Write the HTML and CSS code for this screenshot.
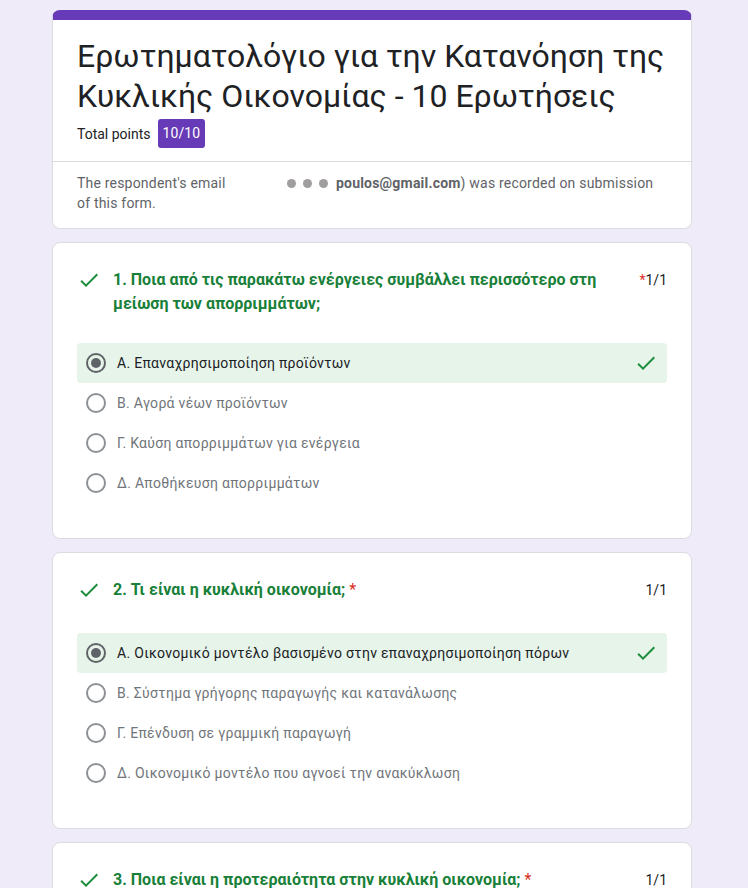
FILE: index.html
```html
<!DOCTYPE html>
<html lang="el">
<head>
<meta charset="utf-8">
<title>Ερωτηματολόγιο</title>
<link rel="stylesheet" href="styles.css">
</head>
<body>
<main class="page">
  <section class="card header-card">
    <div class="header-main">
      <h1 class="form-title">Ερωτηματολόγιο για την Κατανόηση της Κυκλικής Οικονομίας - 10 Ερωτήσεις</h1>
      <div class="total">
        <span class="total-label">Total points</span>
        <span class="badge">10/10</span>
      </div>
    </div>
    <div class="email-row">
      <div class="email-left">The respondent's email of this form.</div>
      <div class="email-right">
        <span class="dot"></span><span class="dot"></span><span class="dot"></span><b>poulos@gmail.com</b>) was recorded on submission
      </div>
    </div>
  </section>

  <section class="card q-card">
    <div class="q-head">
      <svg class="q-check" viewBox="0 0 24 24" width="24" height="24"><path d="M9 16.17L4.83 12l-1.42 1.41L9 19 21 7l-1.41-1.41z"/></svg>
      <div class="q-title">1. Ποια από τις παρακάτω ενέργειες συμβάλλει περισσότερο στη μείωση των απορριμμάτων;</div>
      <div class="q-points"><span class="req">*</span>1/1</div>
    </div>
    <ul class="options">
      <li class="option correct"><span class="radio on"></span><span class="opt-text">Α. Επαναχρησιμοποίηση προϊόντων</span><svg class="opt-check" viewBox="0 0 24 24" width="24" height="24"><path d="M9 16.17L4.83 12l-1.42 1.41L9 19 21 7l-1.41-1.41z"/></svg></li>
      <li class="option"><span class="radio"></span><span class="opt-text">Β. Αγορά νέων προϊόντων</span></li>
      <li class="option"><span class="radio"></span><span class="opt-text">Γ. Καύση απορριμμάτων για ενέργεια</span></li>
      <li class="option"><span class="radio"></span><span class="opt-text">Δ. Αποθήκευση απορριμμάτων</span></li>
    </ul>
  </section>

  <section class="card q-card">
    <div class="q-head">
      <svg class="q-check" viewBox="0 0 24 24" width="24" height="24"><path d="M9 16.17L4.83 12l-1.42 1.41L9 19 21 7l-1.41-1.41z"/></svg>
      <div class="q-title">2. Τι είναι η κυκλική οικονομία; <span class="req">*</span></div>
      <div class="q-points">1/1</div>
    </div>
    <ul class="options">
      <li class="option correct"><span class="radio on"></span><span class="opt-text">Α. Οικονομικό μοντέλο βασισμένο στην επαναχρησιμοποίηση πόρων</span><svg class="opt-check" viewBox="0 0 24 24" width="24" height="24"><path d="M9 16.17L4.83 12l-1.42 1.41L9 19 21 7l-1.41-1.41z"/></svg></li>
      <li class="option"><span class="radio"></span><span class="opt-text">Β. Σύστημα γρήγορης παραγωγής και κατανάλωσης</span></li>
      <li class="option"><span class="radio"></span><span class="opt-text">Γ. Επένδυση σε γραμμική παραγωγή</span></li>
      <li class="option"><span class="radio"></span><span class="opt-text">Δ. Οικονομικό μοντέλο που αγνοεί την ανακύκλωση</span></li>
    </ul>
  </section>

  <section class="card q-card">
    <div class="q-head">
      <svg class="q-check" viewBox="0 0 24 24" width="24" height="24"><path d="M9 16.17L4.83 12l-1.42 1.41L9 19 21 7l-1.41-1.41z"/></svg>
      <div class="q-title">3. Ποια είναι η προτεραιότητα στην κυκλική οικονομία; <span class="req">*</span></div>
      <div class="q-points">1/1</div>
    </div>
  </section>
</main>
</body>
</html>
```

FILE: styles.css
```css
html, body {
  margin: 0;
  padding: 0;
  background: #f0ebf8;
  font-family: Roboto, "Noto Sans", Arial, sans-serif;
  color: #202124;
}

.page {
  width: 640px;
  margin: 10px 0 0 52px;
  display: flex;
  flex-direction: column;
  gap: 13px;
  padding-bottom: 40px;
}

.card {
  background: #fff;
  border: 1px solid #dadce0;
  border-radius: 8px;
  box-sizing: border-box;
}

.header-card {
  border-top: 10px solid #673ab7;
}

.header-main {
  padding: 16px 24px 13px;
  border-bottom: 1px solid #dadce0;
}

.form-title {
  margin: 0;
  font-size: 32px;
  line-height: 40px;
  font-weight: 400;
  color: #202124;
}

.total {
  margin-top: 3px;
  display: flex;
  align-items: center;
  gap: 7px;
  font-size: 14px;
}

.badge {
  background: #673ab7;
  color: #fff;
  height: 29px;
  line-height: 29px;
  padding: 0 5px;
  border-radius: 3px;
  letter-spacing: 0.1px;
}

.email-row {
  display: flex;
  padding: 11px 24px 15px;
  font-size: 14px;
  line-height: 20px;
  letter-spacing: 0.2px;
  color: #5f6368;
}

.email-left {
  width: 160px;
  margin-right: 50px;
  flex: none;
}

.email-right {
  display: flex;
  align-items: center;
  height: 20px;
  white-space: nowrap;
}

.email-right b {
  font-weight: 700;
  margin-left: 1px;
}

.dot {
  width: 9px;
  height: 9px;
  border-radius: 50%;
  background: #a19e9e;
  margin-right: 7px;
}

.q-card {
  padding: 25px 24px 35px;
}

.q-head {
  display: flex;
  align-items: flex-start;
  min-height: 28px;
}

.q-check {
  flex: none;
  fill: #1e8e3e;
  margin-right: 12px;
}

.q-title {
  flex: 1;
  font-size: 16px;
  line-height: 24px;
  font-weight: 700;
  color: #188038;
  padding-right: 16px;
}

.req {
  color: #d93025;
  font-weight: 400;
}

.q-points {
  font-size: 14px;
  line-height: 24px;
  color: #202124;
  white-space: nowrap;
}

.options {
  list-style: none;
  margin: 27px 0 0;
  padding: 0;
}

.option {
  display: flex;
  align-items: center;
  height: 40px;
  padding: 0 9px;
  border-radius: 4px;
  font-size: 14px;
  letter-spacing: 0.3px;
  color: #70757a;
}

.option.correct {
  background: #e6f4ea;
  color: #202124;
}

.radio {
  flex: none;
  width: 20px;
  height: 20px;
  box-sizing: border-box;
  border: 2px solid #8d9196;
  border-radius: 50%;
  margin-right: 11px;
  display: flex;
  align-items: center;
  justify-content: center;
}

.radio.on {
  border-color: #5f6368;
}

.radio.on::after {
  content: "";
  width: 10px;
  height: 10px;
  border-radius: 50%;
  background: #5f6368;
}

.opt-text {
  flex: 1;
}

.opt-check {
  flex: none;
  fill: #1e8e3e;
}
```
